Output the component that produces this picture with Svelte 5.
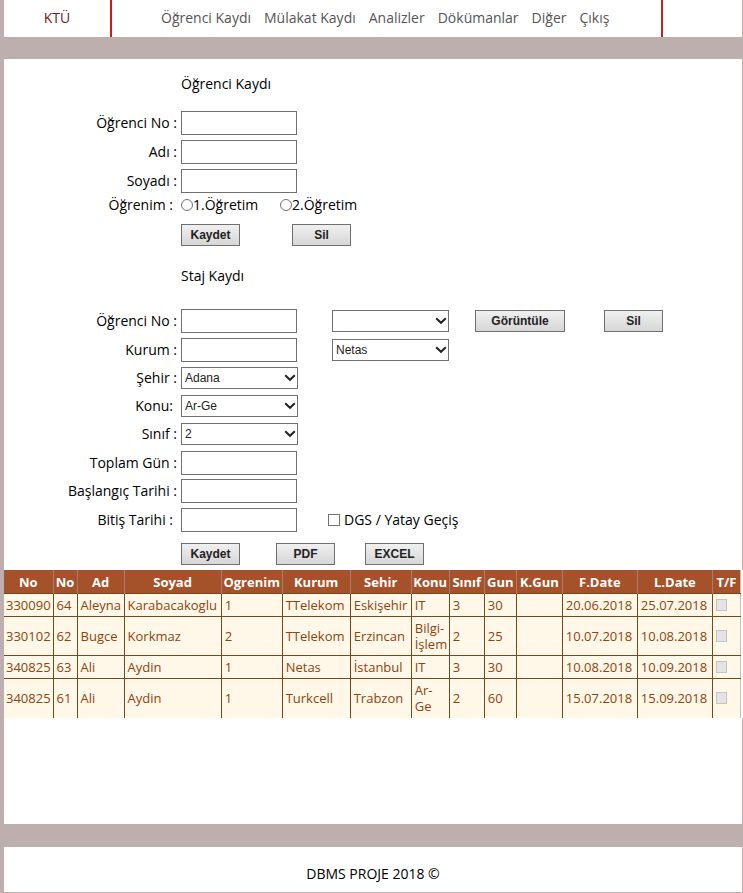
<script>
  const menu = ['Öğrenci Kaydı', 'Mülakat Kaydı', 'Analizler', 'Dökümanlar', 'Diğer', 'Çıkış'];
  const columns = [
    ['No', 49], ['No', 24], ['Ad', 47], ['Soyad', 97], ['Ogrenim', 61], ['Kurum', 68], ['Sehir', 61],
    ['Konu', 38], ['Sınıf', 35], ['Gun', 32], ['K.Gun', 46], ['F.Date', 75], ['L.Date', 75], ['T/F', 28]
  ];
  const records = [
    ['330090', '64', 'Aleyna', 'Karabacakoglu', '1', 'TTelekom', 'Eskişehir', 'IT', '3', '30', '', '20.06.2018', '25.07.2018'],
    ['330102', '62', 'Bugce', 'Korkmaz', '2', 'TTelekom', 'Erzincan', 'Bilgi-İşlem', '2', '25', '', '10.07.2018', '10.08.2018'],
    ['340825', '63', 'Ali', 'Aydin', '1', 'Netas', 'İstanbul', 'IT', '3', '30', '', '10.08.2018', '10.09.2018'],
    ['340825', '61', 'Ali', 'Aydin', '1', 'Turkcell', 'Trabzon', 'Ar-Ge', '2', '60', '', '15.07.2018', '15.09.2018']
  ];
</script>

{#snippet dropdown(id, value, label)}
  <span class="select">
    <select {id} aria-label={label}><option>{value}</option></select>
    <svg viewBox="0 0 12 8" aria-hidden="true"><path d="M1.2 1.2 6 5.8l4.8-4.6" /></svg>
  </span>
{/snippet}

<div class="page">
  <header>
    <a class="brand" href="#home">KTÜ</a>
    <nav>
      {#each menu as item}
        <a href="#menu">{item}</a>
      {/each}
    </nav>
  </header>

  <main>
    <form>
      <h2>Öğrenci Kaydı</h2>
      <div class="row"><label for="no">Öğrenci No :</label><input id="no" type="text" /></div>
      <div class="row"><label for="ad">Adı :</label><input id="ad" type="text" /></div>
      <div class="row"><label for="soyad">Soyadı :</label><input id="soyad" type="text" /></div>
      <div class="row radios">
        <span class="label loose">Öğrenim :</span>
        <label class="choice"><input type="radio" name="ogrenim" />1.Öğretim</label>
        <label class="choice"><input type="radio" name="ogrenim" />2.Öğretim</label>
      </div>
      <div class="row actions wide"><button type="button">Kaydet</button><button type="button">Sil</button></div>
    </form>

    <form class="staj">
      <h2>Staj Kaydı</h2>
      <div class="row">
        <label for="sno">Öğrenci No :</label><input id="sno" type="text" />
        <div class="extra">
          {@render dropdown('kayit', '', 'Kayıt')}
          <button class="show" type="button">Görüntüle</button>
          <button class="delete" type="button">Sil</button>
        </div>
      </div>
      <div class="row">
        <label for="kurum">Kurum :</label><input id="kurum" type="text" />
        <div class="extra">{@render dropdown('kurumlar', 'Netas', 'Kurum')}</div>
      </div>
      <div class="row short"><label for="sehir">Şehir :</label>{@render dropdown('sehir', 'Adana')}</div>
      <div class="row short"><label class="loose" for="konu">Konu:</label>{@render dropdown('konu', 'Ar-Ge')}</div>
      <div class="row short"><label for="sinif">Sınıf :</label>{@render dropdown('sinif', '2')}</div>
      <div class="row"><label for="gun">Toplam Gün :</label><input id="gun" type="text" /></div>
      <div class="row short"><label for="bas">Başlangıç Tarihi :</label><input id="bas" type="text" /></div>
      <div class="row">
        <label class="loose" for="bitis">Bitiş Tarihi :</label><input id="bitis" type="text" />
        <label class="check"><input type="checkbox" />DGS / Yatay Geçiş</label>
      </div>
      <div class="row actions export">
        <button type="button">Kaydet</button><button type="button">PDF</button><button type="button">EXCEL</button>
      </div>
    </form>

    <div class="records">
      <table>
        <colgroup>
          {#each columns as [, width]}<col style:width="{width / 7.36}%" />{/each}
        </colgroup>
        <thead>
          <tr>{#each columns as [name]}<th>{name}</th>{/each}</tr>
        </thead>
        <tbody>
          {#each records as record}
            <tr>
              {#each record as cell, i}<td class:wrap={i === 7}>{cell}</td>{/each}
              <td><input type="checkbox" disabled aria-label="T/F" /></td>
            </tr>
          {/each}
        </tbody>
      </table>
    </div>
  </main>

  <footer>DBMS PROJE 2018 ©</footer>
</div>

<style>
  :global(body) { background: #beafaf; }
  * { box-sizing: border-box; }
  .page {
    display: flex;
    flex-direction: column;
    min-height: 100vh;
    padding: 0 1px 1px 4px;
    font: 14px/16px "Trebuchet MS", "Open Sans", sans-serif;
    color: #000;
  }
  header { display: flex; height: 37px; background: #fff; line-height: 36px; }
  a { text-decoration: none; }
  .brand {
    width: 108px;
    border-right: 2px solid #dc1414;
    color: #7b1420;
    text-align: center;
  }
  nav {
    display: flex;
    gap: 13px;
    width: 551px;
    padding-left: 49px;
    border-right: 2px solid #be2424;
    white-space: nowrap;
  }
  nav a { color: #555; }
  main { flex: 1; margin: 22px 0 23px; padding-top: 4px; background: #fff; }
  h2 { margin: 0 0 3px 177px; font-size: 14px; font-weight: 400; line-height: 42px; }
  .staj h2 { margin-bottom: 9px; }
  .row { display: flex; align-items: center; height: 29px; white-space: nowrap; }
  .row.short { height: 28px; }
  .row.radios { height: 20px; }
  .row > label:first-child, .label { width: 177px; padding-right: 4px; text-align: right; }
  .row > .loose:first-child { padding-right: 8px; }
  input[type="text"] {
    width: 116px;
    height: 24px;
    margin: 0;
    padding: 2px;
    border: 1px solid #707070;
    background: #fff;
  }
  .choice { display: flex; align-items: center; width: 99px; }
  input[type="radio"], input[type="checkbox"] {
    appearance: none;
    flex: none;
    width: 12px;
    height: 12px;
    margin: 0;
    border: 1px solid #707070;
    background: #fff;
  }
  input[type="radio"] { border-radius: 50%; }
  button {
    width: 59px;
    height: 22px;
    padding: 0;
    border: 1px solid #707070;
    background: linear-gradient(#f0f0f0, #d6d6d6);
    color: #222;
    font: bold 12px/18px "Liberation Sans", Arial, sans-serif;
  }
  .actions { height: 40px; padding-left: 177px; }
  .wide { gap: 52px; }
  .export { gap: 30px; align-items: flex-end; height: 36px; padding-bottom: 5px; }
  .export button:first-child { margin-right: 6px; }
  .extra { display: flex; align-items: center; margin-left: 35px; }
  .show { width: 90px; margin-left: 26px; }
  .delete { margin-left: 39px; }
  .select { display: grid; width: 117px; height: 22px; }
  .select > * { grid-area: 1 / 1; }
  select {
    appearance: none;
    width: 100%;
    height: 22px;
    padding: 0 3px;
    border: 1px solid #707070;
    border-radius: 0;
    background: #fff;
    color: #222;
    font: 12px/18px "Liberation Sans", Arial, sans-serif;
  }
  .select svg {
    place-self: center end;
    width: 12px;
    height: 8px;
    margin-right: 2px;
    fill: none;
    stroke: #222;
    stroke-width: 2;
    pointer-events: none;
  }
  .check { display: flex; align-items: center; gap: 4px; margin-left: 31px; }
  .records { margin-right: -1px; padding-right: 2px; background: #fff; }
  table {
    width: 100%;
    table-layout: fixed;
    border-collapse: collapse;
    border-right: 1px solid #c8c0bc;
    background: #fff7e7;
    color: #8c4510;
    font-size: 13px;
  }
  th, td { padding: 3px 1px 3px 3px; text-align: left; white-space: nowrap; }
  th {
    padding: 4px 0 3px;
    border-right: 1px solid #a58070;
    background: #a55129;
    color: #fff;
    text-align: center;
  }
  td { border: 1px solid #74491c; }
  td:first-child { padding-left: 2px; border-left: 0; }
  td:last-child, th:last-child { border-right: 0; }
  tr:last-child td { padding-bottom: 4px; border-bottom: 0; }
  td.wrap { white-space: normal; }
  td input[type="checkbox"] { display: block; width: 11px; border-color: #c4c4c4; background: #e4e4e4; }
  footer { height: 45px; padding-top: 19px; background: #fff; text-align: center; }
</style>
